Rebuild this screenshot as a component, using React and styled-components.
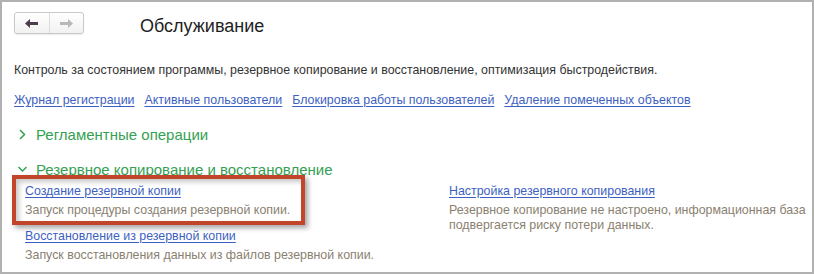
import styled, { createGlobalStyle } from "styled-components";

const GlobalStyle = createGlobalStyle`
  html, body {
    margin: 0;
    padding: 0;
    background: #ffffff;
  }
  body {
    font-family: "Liberation Sans", Arial, sans-serif;
  }
`;

const Frame = styled.div`
  width: 814px;
  height: 274px;
  box-sizing: border-box;
  border: 2px solid #b1b1b1;
  background: #fff;
  padding: 10px 0 0 12px;
  overflow: hidden;
`;

const Header = styled.div`
  display: flex;
  align-items: center;
  height: 22px;
`;

const NavGroup = styled.div`
  display: flex;
  width: 70px;
  height: 22px;
  box-sizing: border-box;
  border: 1px solid #c9c9c9;
  border-radius: 3px;
  background: linear-gradient(#ffffff, #f1f1f1);
  box-shadow: 0 1px 1px rgba(0, 0, 0, 0.08);
`;

const NavButton = styled.div`
  flex: 1;
  display: flex;
  align-items: center;
  justify-content: center;
  & + & {
    border-left: 1px solid #dcdcdc;
  }
`;

const Title = styled.h1`
  margin: 6px 0 0 56px;
  font-size: 18px;
  font-weight: normal;
  color: #1e1e1e;
  line-height: 22px;
`;

const Intro = styled.p`
  margin: 29px 0 0;
  font-size: 12.4px;
  line-height: 15px;
  color: #333;
  white-space: nowrap;
`;

const LinkRow = styled.div`
  display: flex;
  gap: 10px;
  margin-top: 15px;
`;

const Link = styled.a`
  font-size: 12.4px;
  line-height: 15px;
  color: #3d5fc2;
  text-decoration: underline;
  text-underline-offset: 2px;
  cursor: pointer;
  white-space: nowrap;
`;

const Section = styled.div`
  display: flex;
  align-items: center;
  gap: 9px;
  height: 20px;
  margin-top: ${(p) => p.$top}px;
  padding-left: 4px;
  color: #34a152;
  font-size: 15px;
`;

const Columns = styled.div`
  display: grid;
  grid-template-columns: 424px 1fr;
  margin-top: 5px;
  padding-left: 11px;
`;

const Column = styled.div`
  display: flex;
  flex-direction: column;
  gap: 11px;
`;

const Item = styled.div`
  position: relative;
  display: flex;
  flex-direction: column;
  align-items: flex-start;
  gap: 4px;

  ${(p) =>
    p.$marked &&
    `
    &::before {
      content: "";
      position: absolute;
      left: -13px;
      top: -9px;
      width: 293px;
      height: 50px;
      box-sizing: border-box;
      border: 4px solid #c0452b;
      box-shadow: 3px 3px 5px rgba(0, 0, 0, 0.35),
        inset 3px 3px 5px rgba(0, 0, 0, 0.22);
      pointer-events: none;
    }
  `}
`;

const Note = styled.div`
  font-size: 12.4px;
  line-height: 15px;
  color: #8a7f70;
  white-space: nowrap;
`;

const ArrowLeft = ({ color }) => (
  <svg width="13" height="9" viewBox="0 0 13 9">
    <path d="M0 4.5 L5 0 V3 H13 V6 H5 V9 Z" fill={color} />
  </svg>
);

const ArrowRight = ({ color }) => (
  <svg width="13" height="9" viewBox="0 0 13 9">
    <path d="M13 4.5 L8 0 V3 H0 V6 H8 V9 Z" fill={color} />
  </svg>
);

const Chevron = ({ open }) => (
  <svg width="9" height="11" viewBox="0 0 9 11">
    {open ? (
      <polyline points="0.5,3 4.5,7 8.5,3" fill="none" stroke="#34a152" strokeWidth="1.5" />
    ) : (
      <polyline points="2,1 6.5,5.5 2,10" fill="none" stroke="#34a152" strokeWidth="1.5" />
    )}
  </svg>
);

export default function App() {
  return (
    <>
      <GlobalStyle />
      <Frame>
        <Header>
          <NavGroup>
            <NavButton>
              <ArrowLeft color="#4b3d4b" />
            </NavButton>
            <NavButton>
              <ArrowRight color="#b8b8b8" />
            </NavButton>
          </NavGroup>
          <Title>Обслуживание</Title>
        </Header>

        <Intro>
          Контроль за состоянием программы, резервное копирование и восстановление, оптимизация быстродействия.
        </Intro>

        <LinkRow>
          <Link>Журнал регистрации</Link>
          <Link>Активные пользователи</Link>
          <Link>Блокировка работы пользователей</Link>
          <Link>Удаление помеченных объектов</Link>
        </LinkRow>

        <Section $top={16}>
          <Chevron />
          Регламентные операции
        </Section>
        <Section $top={15}>
          <Chevron open />
          Резервное копирование и восстановление
        </Section>

        <Columns>
          <Column>
            <Item $marked>
              <Link>Создание резервной копии</Link>
              <Note>Запуск процедуры создания резервной копии.</Note>
            </Item>
            <Item>
              <Link>Восстановление из резервной копии</Link>
              <Note>Запуск восстановления данных из файлов резервной копии.</Note>
            </Item>
          </Column>
          <Column>
            <Item>
              <Link>Настройка резервного копирования</Link>
              <Note>
                Резервное копирование не настроено, информационная база
                <br />
                подвергается риску потери данных.
              </Note>
            </Item>
          </Column>
        </Columns>
      </Frame>
    </>
  );
}
